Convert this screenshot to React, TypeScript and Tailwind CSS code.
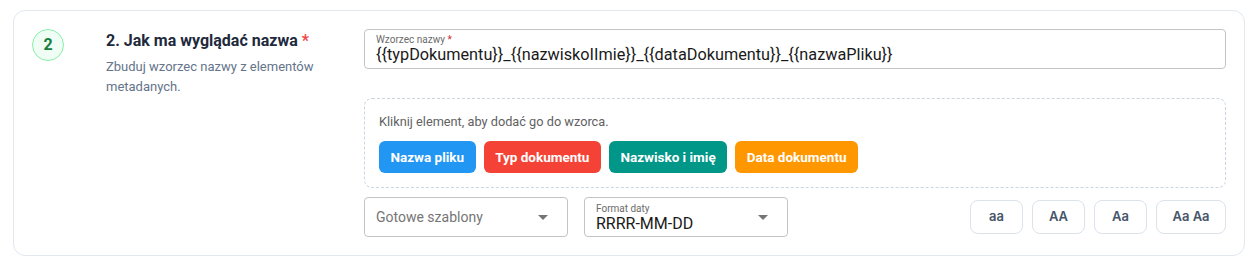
import { useState } from "react";

const tokens = [
    { id: "nazwaPliku", label: "Nazwa pliku", color: "bg-[#2196f3]" },
    { id: "typDokumentu", label: "Typ dokumentu", color: "bg-[#f44336]" },
    { id: "nazwiskoImie", label: "Nazwisko i imię", color: "bg-[#009688]" },
    { id: "dataDokumentu", label: "Data dokumentu", color: "bg-[#ff9800]" },
];

const caseOptions = [
    { id: "lower", label: "aa", width: "w-[53px]" },
    { id: "upper", label: "AA", width: "w-[53px]" },
    { id: "capital", label: "Aa", width: "w-[53px]" },
    { id: "title", label: "Aa Aa", width: "w-[70px]" },
];

function Caret() {
    return (
        <svg width="10" height="5" viewBox="0 0 10 5" className="shrink-0">
            <path d="M0 0 L10 0 L5 5 Z" fill="#757575" />
        </svg>
    );
}

export default function App() {
    const [pattern] = useState("{{typDokumentu}}_{{nazwiskoIImie}}_{{dataDokumentu}}_{{nazwaPliku}}");

    return (
        <div className="bg-white pt-[10px] pl-[13px] pr-[11px] font-['Roboto',sans-serif]">
            <div className="flex border border-[#e2e8f0] rounded-[12px] p-[18px] h-[246px]">
                <div className="w-8 h-8 shrink-0 rounded-full border border-[#86efac] bg-[#f0fdf4] flex items-center justify-center text-[#15803d] font-bold text-[16px] mr-[42px]">
                    2
                </div>

                <div className="w-[258px] shrink-0">
                    <h2 className="text-[16px] leading-6 font-bold text-[#1e293b]">
                        2. Jak ma wyglądać nazwa <span className="text-[#ef4444]">*</span>
                    </h2>
                    <p className="mt-1 text-[13px] leading-5 text-[#64748b] w-[230px]">
                        Zbuduj wzorzec nazwy z elementów metadanych.
                    </p>
                </div>

                <div className="flex-1 flex flex-col">
                    <div className="h-[40px] border border-[#c4c4c4] rounded-[4px] px-[11px] flex flex-col justify-center">
                        <span className="text-[10px] leading-[11px] text-[#6b6b6b]">
                            Wzorzec nazwy <span className="text-[#d32f2f]">*</span>
                        </span>
                        <span className="text-[16.25px] leading-[19px] text-[#1a1a1a]">{pattern}</span>
                    </div>

                    <div className="mt-[29px] h-[91px] border border-dashed border-[#cbd5e1] rounded-[8px] pt-[14px] px-[14px]">
                        <p className="text-[12.75px] leading-[18px] text-[#616161]">
                            Kliknij element, aby dodać go do wzorca.
                        </p>
                        <div className="mt-[10px] flex gap-2">
                            {tokens.map(token => (
                                <button
                                    key={token.id}
                                    className={`${token.color} h-8 px-[11.5px] rounded-[6px] text-white font-bold text-[13.5px]`}>
                                    {token.label}
                                </button>
                            ))}
                        </div>
                    </div>

                    <div className="mt-[9px] flex items-center">
                        <div className="w-[204px] h-[40px] border border-[#c4c4c4] rounded-[4px] pl-[11px] pr-[19px] flex items-center justify-between">
                            <span className="text-[14px] text-[#757575]">Gotowe szablony</span>
                            <Caret />
                        </div>
                        <div className="ml-[16px] w-[204px] h-[40px] border border-[#c4c4c4] rounded-[4px] pl-[11px] pr-[19px] flex items-center justify-between">
                            <div className="flex flex-col pt-[2px]">
                                <span className="text-[10px] leading-[11px] text-[#6b6b6b]">Format daty</span>
                                <span className="text-[16px] leading-[19px] text-[#1a1a1a]">RRRR-MM-DD</span>
                            </div>
                            <Caret />
                        </div>

                        <div className="ml-auto flex gap-[9px]">
                            {caseOptions.map(option => (
                                <button
                                    key={option.id}
                                    className={`${option.width} h-[34px] border border-[#dbe2ea] rounded-[8px] text-[13px] font-semibold text-[#475569] font-['Inter',sans-serif]`}>
                                    {option.label}
                                </button>
                            ))}
                        </div>
                    </div>
                </div>
            </div>
        </div>
    );
}
